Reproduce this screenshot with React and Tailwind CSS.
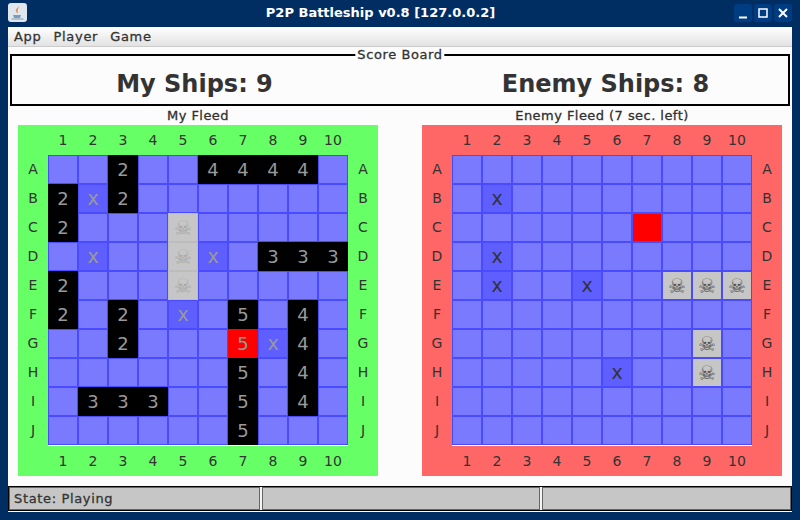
import React from 'react';

const font = { fontFamily: '"DejaVu Sans", sans-serif' };
const cols = [1, 2, 3, 4, 5, 6, 7, 8, 9, 10];
const rows = ['A', 'B', 'C', 'D', 'E', 'F', 'G', 'H', 'I', 'J'];

// board rows: . water, x miss, k skull, r red, digits = ship
const myBoard = [
  '..2..4444.',
  '2x2.......',
  '2...k.....',
  '.x..kx.333',
  '2...k.....',
  '2.2.x.5.4.',
  '..2...RX4.',
  '......5.4.',
  '.333..5.4.',
  '......5...',
];
const enemyBoard = [
  '..........',
  '.x........',
  '......r...',
  '.x........',
  '.x..x..kkk',
  '..........',
  '........k.',
  '.....x..k.',
  '..........',
  '..........',
];

const Skull = ({ dim }) => (
  <span className={`text-[20px] leading-none ${dim ? 'text-[#a8a8a8]' : 'text-[#555555]'}`}>☠</span>
);

const Cell = ({ v, mine }) => {
  if (v === '.') return <div className="border border-[#4a4aff] bg-[#7a7aff]" />;
  if (v === 'x' || v === 'X') {
    return (
      <div className={`flex items-center justify-center border border-[#4a4aff] bg-[#5f5fff] text-[19px] leading-none ${mine ? 'text-[#999999]' : 'text-[#333333]'}`}>
        x
      </div>
    );
  }
  if (v === 'k') {
    return (
      <div className={`flex items-center justify-center border bg-[#c6c6c6] ${mine ? 'border-[#bcbcbc]' : 'border-[#4a4aff]'}`}>
        <Skull dim={mine} />
      </div>
    );
  }
  if (v === 'r') return <div className="border border-[#4a4aff] bg-[#ff0000]" />;
  if (v === 'R') return <div className="flex items-center justify-center bg-[#ff0000] text-[18px] leading-none text-[#999999]">5</div>;
  return <div className="flex items-center justify-center bg-black text-[18px] leading-none text-[#999999]">{v}</div>;
};

const Label = ({ children }) => (
  <div className="flex items-center justify-center text-[14px] leading-none text-[#333333]">{children}</div>
);

const RowLabel = ({ children }) => (
  <div className="flex items-center justify-center pb-[2px] text-[14px] leading-none text-[#333333]">{children}</div>
);

const Board = ({ title, data, mine }) => (
  <div className="flex w-[360px] flex-col">
    <div className="flex h-[19px] items-center justify-center text-[13px] leading-none tracking-[0.45px] text-[#2e2e2e] [-webkit-text-stroke:0.3px_#333333]">{title}</div>
    <div className={`grid grid-cols-[30px_repeat(10,30px)_30px] grid-rows-[30px_repeat(10,29px)_31px] ${mine ? 'bg-[#66ff66]' : 'bg-[#ff6666]'}`}>
      <div />
      {cols.map((c) => <Label key={c}>{c}</Label>)}
      <div />
      {rows.map((r, i) => (
        <React.Fragment key={r}>
          <RowLabel>{r}</RowLabel>
          {data[i].split('').map((v, j) => <Cell key={j} v={v} mine={mine} />)}
          <RowLabel>{r}</RowLabel>
        </React.Fragment>
      ))}
      <div />
      {cols.map((c) => (
        <div key={c} className="flex items-center justify-center border-t border-white text-[14px] leading-none text-[#333333]">{c}</div>
      ))}
      <div />
    </div>
  </div>
);

const WinButton = ({ children }) => (
  <div className="flex h-[18px] w-[18px] items-center justify-center rounded-[3px] bg-[#003c82]">
    <svg width="14" height="14" viewBox="0 0 14 14" fill="none" stroke="#ffffff">{children}</svg>
  </div>
);

export default function App() {
  return (
    <div className="flex h-[520px] w-[800px] flex-col overflow-hidden bg-[#002d62]" style={font}>
      {/* title bar */}
      <div className="flex h-[27px] shrink-0 items-center px-[8px] pb-[2px]">
        <div className="flex h-[19px] w-[19px] items-center justify-center rounded-[3px] bg-[#dfe6ee]">
          <svg width="15" height="16" viewBox="0 0 15 16">
            <path d="M8 1c1 2-3 3-2 5 .4 1 1 1.500 1 2.500C9 7 6.500 6 8 4c.6-.8 1-2 0-3z" fill="#e8853a" />
            <path d="M3 10h8l-1 3H4z" fill="#7f9ab8" />
            <path d="M1.500 14h12" stroke="#7f9ab8" strokeWidth="1" />
          </svg>
        </div>
        <div className="flex-1 text-center text-[13px] font-bold leading-none text-white">P2P Battleship v0.8 [127.0.0.2]</div>
        <div className="flex gap-[2px]">
          <WinButton><path d="M3 11.500h8" strokeWidth="2" /></WinButton>
          <WinButton><rect x="3" y="3" width="8" height="8" strokeWidth="1.500" /></WinButton>
          <WinButton><path d="M3 3l8 8M11 3l-8 8" strokeWidth="2" /></WinButton>
        </div>
      </div>

      <div className="mx-[8px] flex flex-1 flex-col bg-[#fcfcfc]">
        {/* menu bar */}
        <div className="flex h-[20px] shrink-0 items-center gap-[12px] border-b border-[#cccccc] bg-gradient-to-b from-white to-[#e2e2e2] px-[6px] text-[13px] leading-none tracking-[0.7px] text-[#333333] [-webkit-text-stroke:0.3px_#333333]">
          <span>App</span>
          <span>Player</span>
          <span>Game</span>
        </div>

        {/* score board */}
        <div className="relative mx-[2px] mt-[7px] flex h-[52px] shrink-0 items-center border-2 border-black text-[24px] font-bold leading-none text-[#333333]">
          <span className="absolute left-1/2 top-[-8px] -translate-x-1/2 bg-[#fcfcfc] px-[2px] text-[13px] font-normal leading-[14px] tracking-[0.6px] [-webkit-text-stroke:0.3px_#333333]">Score Board</span>
          <div className="flex-1 pr-[23px] pt-[8px] text-center">My Ships: 9</div>
          <div className="flex-1 pl-[23px] pt-[8px] text-center">Enemy Ships: 8</div>
        </div>

        {/* boards */}
        <div className="flex justify-between px-[10px]">
          <Board title="My Fleed" data={myBoard} mine />
          <Board title="Enemy Fleed (7 sec. left)" data={enemyBoard} />
        </div>

        {/* status bar */}
        <div className="mt-[10px] flex h-[25px] shrink-0 gap-[2px] border border-black bg-[#f4f4f4] text-[13px] leading-none text-[#333333]">
          <div className="flex w-[251px] items-center border border-[#666666] bg-[#c6c6c6] px-[4px] tracking-[0.65px] [-webkit-text-stroke:0.3px_#333333]">State: Playing</div>
          <div className="w-[278px] border border-[#666666] bg-[#c6c6c6]" />
          <div className="flex-1 border border-[#666666] bg-[#c6c6c6]" />
        </div>
      </div>
      <div className="h-[8px] shrink-0" />
    </div>
  );
}
